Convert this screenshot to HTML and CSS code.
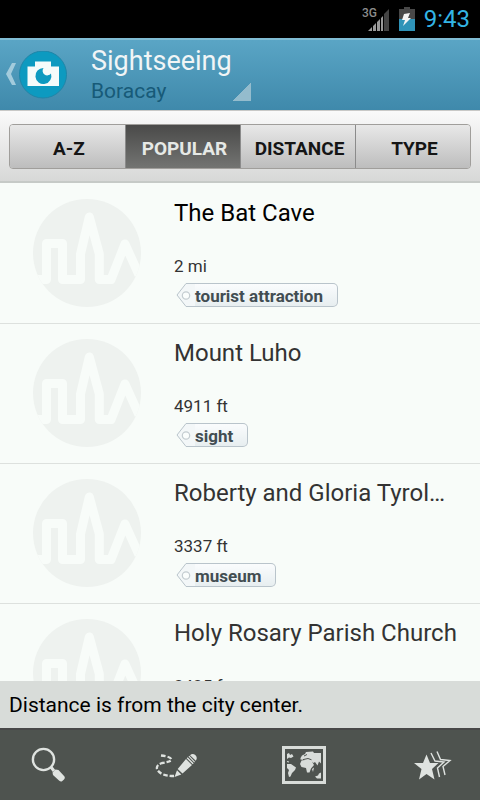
FILE: index.html
```html
<!DOCTYPE html>
<html lang="en">
<head>
<meta charset="utf-8">
<meta name="viewport" content="width=device-width, initial-scale=1">
<title>Sightseeing</title>
<link rel="stylesheet" href="styles.css">
</head>
<body>
<svg class="defs" width="0" height="0" aria-hidden="true">
  <symbol id="skyline" viewBox="0 0 108 108">
    <clipPath id="disc"><circle cx="54" cy="54" r="54"/></clipPath>
    <circle cx="54" cy="54" r="54" fill="#eef2ef"/>
    <path clip-path="url(#disc)" d="M0 80.500H13.500V44.500H29.500V80.500H47.500V55L56.300 18L66.300 55V80.500H78L92 45L106 76" fill="none" stroke="#f8fcf9" stroke-width="9" stroke-linejoin="round"/>
  </symbol>
  <symbol id="tag-end" viewBox="0 0 19 24">
    <path d="M19 .5H10L1 12L10 23.500H19" fill="#f3f7f8" stroke="#b9c4cb"/>
    <circle cx="10" cy="12.500" r="3.700" fill="#fafdfc" stroke="#c3ccd0" stroke-width="1.200"/>
  </symbol>
</svg>

<div class="status">
  <svg class="signal" width="28" height="24" viewBox="0 0 28 24" aria-label="3G signal" role="img">
    <text class="signal-text" x="0" y="10">3G</text>
    <path d="M6 24H10V20ZM11 24H14V16L11 19ZM15 24H18V12L15 15ZM19 24H21V9L19 11Z" fill="#9a9a9a"/>
    <path d="M22 24H27V2L22 7Z" fill="#444"/>
  </svg>
  <svg class="battery" width="16" height="24" viewBox="0 0 16 24" aria-label="Charging" role="img">
    <path d="M0 2H5V0H11V2H16V12H0Z" fill="#484848"/>
    <path d="M0 12H16V24H0Z" fill="#2f93b8"/>
    <path d="M5 7L11 6L9 11L12 11L4 19L6 13L3 13Z" fill="#f4f4f4"/>
  </svg>
  <time class="clock">9:43</time>
</div>

<header class="appbar">
  <a class="home" href="#" aria-label="Back">
    <svg width="68" height="48" viewBox="0 0 68 48" aria-hidden="true">
      <path d="M12 12H16L11 23L16 34H12L6 23Z" fill="#a3cbdc"/>
      <circle cx="43" cy="23.500" r="23.500" fill="#0d9ac0" stroke="#1f86a8"/>
      <path d="M27.500 15.500H35V10.500H51V15.500H59V35H27.500Z" fill="#f5fbfa"/>
      <path d="M43.500 17A8 8 0 1 0 51 22.500A4.500 4.500 0 0 1 43.500 17Z" fill="#0d9ac0"/>
    </svg>
  </a>
  <button class="place" type="button">
    <span class="place-title">Sightseeing</span>
    <span class="place-city">Boracay</span>
  </button>
</header>

<nav class="filters" aria-label="Sort">
  <div class="segments">
    <button class="segment" type="button">A-Z</button>
    <button class="segment segment-on" type="button" aria-pressed="true">POPULAR</button>
    <button class="segment" type="button">DISTANCE</button>
    <button class="segment" type="button">TYPE</button>
  </div>
</nav>

<main class="list">
  <article class="row">
    <svg class="thumb" width="108" height="108" aria-hidden="true"><use href="#skyline"/></svg>
    <div class="info">
      <h2 class="name name-strong">The Bat Cave</h2>
      <p class="distance">2 mi</p>
      <span class="tag"><svg class="tag-end" width="19" height="24" aria-hidden="true"><use href="#tag-end"/></svg><span class="tag-text">tourist attraction</span></span>
    </div>
  </article>
  <article class="row">
    <svg class="thumb" width="108" height="108" aria-hidden="true"><use href="#skyline"/></svg>
    <div class="info">
      <h2 class="name">Mount Luho</h2>
      <p class="distance">4911 ft</p>
      <span class="tag"><svg class="tag-end" width="19" height="24" aria-hidden="true"><use href="#tag-end"/></svg><span class="tag-text">sight</span></span>
    </div>
  </article>
  <article class="row">
    <svg class="thumb" width="108" height="108" aria-hidden="true"><use href="#skyline"/></svg>
    <div class="info">
      <h2 class="name">Roberty and Gloria Tyrol…</h2>
      <p class="distance">3337 ft</p>
      <span class="tag"><svg class="tag-end" width="19" height="24" aria-hidden="true"><use href="#tag-end"/></svg><span class="tag-text">museum</span></span>
    </div>
  </article>
  <article class="row">
    <svg class="thumb" width="108" height="108" aria-hidden="true"><use href="#skyline"/></svg>
    <div class="info">
      <h2 class="name">Holy Rosary Parish Church</h2>
      <p class="distance">2425 ft</p>
    </div>
  </article>
</main>

<p class="note">Distance is from the city center.</p>

<nav class="toolbar" aria-label="Tools">
  <button class="tool" type="button" aria-label="Search">
    <svg width="48" height="48" viewBox="0 0 48 48" aria-hidden="true">
      <circle cx="19.500" cy="18.500" r="10.600" fill="none" stroke="#dfe3e0" stroke-width="2.400"/>
      <path d="M27 26L30 30" stroke="#dfe3e0" stroke-width="3"/>
      <path d="M28.500 31.500L31.500 28.500L34.500 29L40.500 35.500Q41.500 37 40 38.500L38 40.300Q36.500 41 35 39.500L29 34Z" fill="#dfe3e0"/>
    </svg>
  </button>
  <button class="tool" type="button" aria-label="Draw route">
    <svg width="48" height="48" viewBox="0 0 48 48" aria-hidden="true">
      <path d="M9 14.500Q21 16 19 19.500Q17 21 10 22Q4 24 5 28Q8 35 22 35" fill="none" stroke="#dfe3e0" stroke-width="2.300" stroke-dasharray="4.500 2"/>
      <path d="M22.500 36L25 29.300L29.300 33.500ZM25.700 28L34 18L40 24L30.500 32.500ZM34.700 17.300L35.700 16.300L41.700 22.300L40.700 23.300ZM36.500 15.600L37.300 14.800L43 20.800L42.200 21.600ZM38 14.200Q40.500 11.800 43.300 14Q46 16.500 43.800 19.800Z" fill="#dfe3e0"/>
    </svg>
  </button>
  <button class="tool" type="button" aria-label="Map">
    <svg width="48" height="48" viewBox="0 0 48 48" aria-hidden="true">
      <path d="M2 5H46V43H2ZM5 8V40H43V8Z" fill="#d8dcd9" fill-rule="evenodd"/>
      <path d="M7 13L9 12L10 14L12 13L13.500 15.500L11 17L9 16.500L7 18ZM7 20L9 20.500V21.500L7 21ZM7 23L11 23L16 26.500L15 29L12 32L10.500 35.500L9 36L8 32L9 29L7 27Z" fill="#d8dcd9"/>
      <path d="M20.500 17L22 14.500L25 13L26 11L33 10.500L34 12L41 12V22.500L39 20.500L37.500 24.500L35 21L33.500 22L32 20.500L34 24L31 27.500L29.500 31.500L27 31.500L26 27L21.500 26L20 23L21.500 19.500L25 19L20.500 18.500ZM32 28L34 26.500L33 31ZM35 35.500L38 34.500L39 32.500L41 31.500V37.500H37Z" fill="#d8dcd9"/>
      <path d="M23 18.600L28 17.500L31.500 18.800M24 15L27 13.500" fill="none" stroke="#4e534f"/>
    </svg>
  </button>
  <button class="tool" type="button" aria-label="Favourites">
    <svg width="48" height="48" viewBox="0 0 48 48" aria-hidden="true">
      <path d="M18.500 13.500L22 22H30.500L24 28L26.500 38.500L18.500 33L11 38.500L13.500 28L6 22H15Z" fill="#dfe3e0"/>
      <path d="M23 12L27 20L36 21L29.500 27L31.500 36M29 10.500L32.500 18.500L42 19.500L35 25.500L37 34" fill="none" stroke="#dfe3e0" stroke-width="1.400"/>
    </svg>
  </button>
</nav>
</body>
</html>
```

FILE: styles.css
```css
* { box-sizing: border-box; }

body {
  margin: 0;
  height: 100vh;
  display: flex;
  flex-direction: column;
  background: #f8fcf9;
  color: #333;
  font-family: Roboto, "Liberation Sans", sans-serif;
}

button {
  margin: 0;
  padding: 0;
  border: 0;
  background: none;
  font: inherit;
  color: inherit;
}

h2, p { margin: 0; font-weight: 400; }
svg { display: block; flex: none; }
.defs { position: absolute; }

.status {
  flex: none;
  height: 38px;
  padding: 0 10px;
  display: flex;
  align-items: center;
  justify-content: flex-end;
  gap: 9px;
  background: #000;
}
.signal-text { font-size: 12px; font-weight: 500; fill: #8c8c8c; }
.clock { color: #33b5e5; font-size: 24px; line-height: 38px; }

.appbar {
  flex: none;
  height: 72px;
  display: flex;
  align-items: center;
  gap: 23px;
  border-top: 2px solid #80bcd4;
  background: linear-gradient(#5aa5c5, #3f89ab);
}
.place {
  align-self: stretch;
  width: 160px;
  display: flex;
  flex-direction: column;
  justify-content: center;
  text-align: left;
  background: linear-gradient(135deg, transparent 50%, #94bccd 50%) right bottom 9px / 18px 18px no-repeat;
}
.place-title { font-size: 27px; line-height: 32px; color: #f1f5f6; }
.place-city { font-size: 21px; line-height: 28px; color: #175a78; }

.filters {
  flex: none;
  padding: 13px 9px 12px;
  border-top: 1px solid #c9c9c7;
  border-bottom: 2px solid #c6cac7;
  background: linear-gradient(#fafafa, #d7d8d7);
  margin-bottom: 1px;
}
.segments {
  display: grid;
  grid-template-columns: repeat(4, minmax(0, 1fr));
  height: 45px;
  border: 1px solid #a09e9b;
  border-radius: 4px;
  overflow: hidden;
}
.segment {
  font-size: 19px;
  font-weight: 700;
  color: #151515;
  background: linear-gradient(#e8e8e8, #bdbdbd);
  padding-top: 4px;
  padding-left: 3px;
}
.segment + .segment { border-left: 1px solid #8b8b8b; }
.segment-on { color: #e6e9e6; background: linear-gradient(#4a4a49, #737472); }

.list { flex: 1; min-height: 0; overflow: hidden; }
.row {
  height: 140px;
  display: flex;
  gap: 33px;
  padding: 15px 16px 15px 33px;
  border-bottom: 1px solid #dde1de;
}
.info { min-width: 0; display: flex; flex-direction: column; align-items: flex-start; }
.name {
  max-width: 100%;
  font-size: 24px;
  line-height: 28px;
  white-space: nowrap;
}
.name-strong { color: #000; }
.distance { margin-top: 27px; font-size: 17px; line-height: 24px; }
.tag { display: flex; height: 24px; margin: 5px 0 0 2px; }
.tag-text {
  padding: 0 14px 0 0;
  border: 1px solid #b9c4cb;
  border-left: 0;
  border-radius: 0 5px 5px 0;
  background: linear-gradient(#fafcfd, #e7eef0);
  color: #424d52;
  font-size: 17px;
  font-weight: 700;
  line-height: 24px;
}

.note {
  flex: none;
  padding: 1px 9px 0;
  background: #d8dcd9;
  color: #000;
  font-size: 21px;
  line-height: 46px;
}

.toolbar {
  flex: none;
  height: 72px;
  display: flex;
  align-items: center;
  justify-content: space-between;
  padding: 0 24px;
  border-top: 2px solid #484848;
  background: #4e534f;
}
```
